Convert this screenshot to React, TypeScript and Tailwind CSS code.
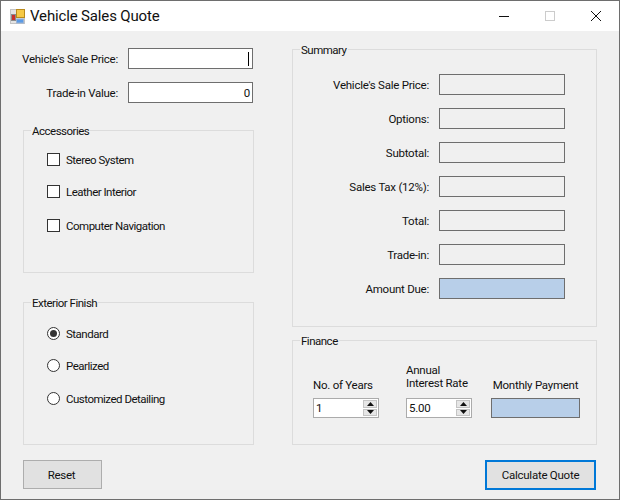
function Group({ title, className, children }: { title: string; className: string; children?: React.ReactNode }) {
  return (
    <div className={"relative border border-[#dcdcdc] " + className}>
      <span className="absolute left-[7px] top-[-8px] bg-[#f0f0f0] px-[1px] tracking-[-0.5px]">{title}</span>
      {children}
    </div>
  );
}
function Check({ label }: { label: string }) {
  return (
    <div className="flex h-[20px] items-center gap-[6px]">
      <div className="h-[13px] w-[13px] border border-[#333] bg-white" />
      <span className="pt-[2px] tracking-[-0.5px]">{label}</span>
    </div>
  );
}
function Radio({ label, on }: { label: string; on?: boolean }) {
  return (
    <div className="flex h-[20px] items-center gap-[6px]">
      <div className={"flex h-[13px] w-[13px] items-center justify-center rounded-full border border-[#333] bg-white"}>
        {on && <div className="h-[7px] w-[7px] rounded-full bg-[#333]" />}
      </div>
      <span className="pt-[2px] tracking-[-0.5px]">{label}</span>
    </div>
  );
}
function Row({ label, blue }: { label: string; blue?: boolean }) {
  return (
    <div className="flex h-[21px] items-center justify-end">
      <span className="mr-[10px]">{label}</span>
      <div className={"h-[21px] w-[126px] border border-[#6e6e6e] " + (blue ? "bg-[#b8cfe9]" : "bg-[#f0f0f0]")} />
    </div>
  );
}
function Spinner({ value }: { value: string }) {
  return (
    <div className="flex h-[20px] w-[66px] items-center justify-between border border-[#ababab] bg-white pl-[2px] pr-[1px]">
      <span>{value}</span>
      <div className="flex h-[16px] w-[14px] flex-col gap-[1px]">
        <div className="flex flex-1 items-center justify-center border border-[#c4c4c4] bg-[#e6e6e6]">
          <svg width="7" height="4" viewBox="0 0 7 4"><path d="M3.5 0 7 4H0z" fill="#111" /></svg>
        </div>
        <div className="flex flex-1 items-center justify-center border border-[#c4c4c4] bg-[#e6e6e6]">
          <svg width="7" height="4" viewBox="0 0 7 4"><path d="M0 0h7L3.5 4z" fill="#111" /></svg>
        </div>
      </div>
    </div>
  );
}
export default function App() {
  return (
    <div className="flex h-[500px] w-[620px] flex-col overflow-hidden whitespace-nowrap border border-[#6e6e6e] bg-[#f0f0f0] font-['Roboto',sans-serif] text-[11.5px] leading-[16px] tracking-[-0.25px] text-[#111]">
      <div className="flex h-[30px] shrink-0 items-center bg-white">
        <svg className="ml-[9px]" width="16" height="16" viewBox="0 0 16 16">
          <rect x="0.5" y="1.5" width="14" height="14" fill="#e4e4e4" stroke="#c4c4c4" />
          <rect x="6.5" y="1.5" width="8" height="8" fill="#f6c945" stroke="#b98a1c" />
          <rect x="1.5" y="6.5" width="4" height="6" fill="#c9302c" stroke="#8c8c8c" />
          <rect x="6.5" y="11" width="7" height="4" fill="#5b9be6" stroke="#9db4d4" />
        </svg>
        <span className="ml-[4px] text-[15px] leading-[20px] tracking-[-0.15px]">Vehicle Sales Quote</span>
        <div className="ml-auto flex items-center">
          <svg width="46" height="30" viewBox="0 0 46 30"><path d="M18 15.5h10" stroke="#111" /></svg>
          <svg width="46" height="30" viewBox="0 0 46 30"><rect x="18.5" y="10.5" width="9" height="9" fill="none" stroke="#ccc" /></svg>
          <svg width="46" height="30" viewBox="0 0 46 30"><path d="M18 10l10 10M28 10 18 20" stroke="#111" /></svg>
        </div>
      </div>
      <div className="flex flex-1 pl-[22px] pr-[22px]">
        <div className="w-[231px]">
          <div className="mr-px mt-[17px] flex h-[21px] items-center justify-end">
            <span className="mr-[10px]">Vehicle's Sale Price:</span>
            <div className="flex h-[21px] w-[125px] shrink-0 items-center justify-end border border-[#6e6e6e] bg-white pr-[3px]"><div className="h-[14px] w-px bg-black" /></div>
          </div>
          <div className="mr-px mt-[13px] flex h-[21px] items-center justify-end">
            <span className="mr-[10px]">Trade-in Value:</span>
            <div className="flex h-[21px] w-[125px] shrink-0 items-center justify-end border border-[#6e6e6e] bg-white pr-[2px]">0</div>
          </div>
          <Group title="Accessories" className="mt-[27px] flex h-[143px] flex-col pl-[23px] pt-[18px]">
            <Check label="Stereo System" />
            <div className="h-[12px]" />
            <Check label="Leather Interior" />
            <div className="h-[14px]" />
            <Check label="Computer Navigation" />
          </Group>
          <Group title="Exterior Finish" className="mt-[29px] flex h-[143px] flex-col pl-[23px] pt-[20px]">
            <Radio label="Standard" on />
            <div className="h-[12px]" />
            <Radio label="Pearlized" />
            <div className="h-[13px]" />
            <Radio label="Customized Detailing" />
          </Group>
          <button className="mt-[15px] h-[29px] w-[79px] border border-[#adadad] bg-[#e1e1e1] pr-[2px] text-center">Reset</button>
        </div>
        <div className="ml-[38px] w-[305px]">
          <Group title="Summary" className="mt-[18px] flex h-[278px] flex-col gap-[13px] pr-[31px] pt-[24px]">
            <Row label="Vehicle's Sale Price:" />
            <Row label="Options:" />
            <Row label="Subtotal:" />
            <Row label="Sales Tax (12%):" />
            <Row label="Total:" />
            <Row label="Trade-in:" />
            <Row label="Amount Due:" blue />
          </Group>
          <Group title="Finance" className="mt-[13px] flex h-[105px] items-end gap-[27px] pb-[26px] pl-[20px]">
            <div className="flex flex-col gap-[5px]"><span>No. of Years</span><Spinner value="1" /></div>
            <div className="flex flex-col gap-[8px]"><span className="leading-[13px]">Annual<br />Interest Rate</span><Spinner value="5.00" /></div>
            <div className="-ml-[8px] flex flex-col items-center gap-[5px]"><span>Monthly Payment</span><div className="h-[20px] w-[89px] border border-[#6e6e6e] bg-[#b8cfe9]" /></div>
          </Group>
          <div className="mt-[15px] flex justify-end">
            <button className="mr-px h-[30px] w-[111px] border-2 border-[#0078d7] bg-[#e1e1e1] text-center">Calculate Quote</button>
          </div>
        </div>
      </div>
    </div>
  );
}
